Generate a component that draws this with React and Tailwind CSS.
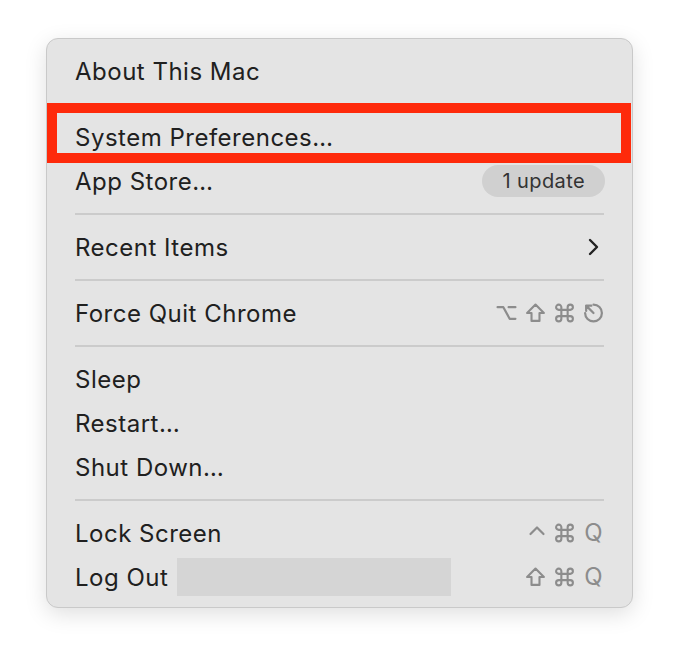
import React from "react";

const font = { fontFamily: "Inter, 'Noto Sans', 'Liberation Sans', sans-serif" };

function Option() {
  return (
    <svg width="21" height="22" viewBox="0 0 20 20" fill="none" stroke="currentColor" strokeWidth="2.1" strokeLinecap="round" strokeLinejoin="round">
      <path d="M1.5 4.5H7L13 15.5H18.5M12 4.5H18.5" />
    </svg>
  );
}

function Shift() {
  return (
    <svg width="21" height="22" viewBox="0 0 20 20" fill="none" stroke="currentColor" strokeWidth="2" strokeLinejoin="round">
      <path d="M10 2L2 10H6.2V17.5H13.8V10H18Z" />
    </svg>
  );
}

function Command() {
  return (
    <svg width="21" height="22" viewBox="0 0 20 20" fill="none" stroke="currentColor" strokeWidth="2" strokeLinejoin="round">
      <path d="M7 7V4.5A2.5 2.5 0 1 0 4.5 7H15.5A2.5 2.5 0 1 0 13 4.5V15.5A2.5 2.5 0 1 0 15.5 13H4.5A2.5 2.5 0 1 0 7 15.5Z" />
    </svg>
  );
}

function Control() {
  return (
    <svg width="18" height="22" viewBox="0 0 18 20" fill="none" stroke="currentColor" strokeWidth="2.2" strokeLinecap="round" strokeLinejoin="round">
      <path d="M2.5 11L9 4.5L15.5 11" />
    </svg>
  );
}

function Escape() {
  return (
    <svg width="21" height="22" viewBox="0 0 20 20" fill="none" stroke="currentColor" strokeWidth="2.1" strokeLinecap="round" strokeLinejoin="round">
      <path d="M10 2A8 8 0 1 1 2 10" />
      <path d="M10 10L3 3M3 8V3H8" />
    </svg>
  );
}

function Q() {
  return <span className="text-[24px] leading-none w-[21px] text-center">Q</span>;
}

function Row({ children, right }) {
  return (
    <div className="h-[44px] flex items-center justify-between">
      <span className="text-[24px] tracking-[0.5px] text-[#202020] pt-[1px]">{children}</span>
      {right}
    </div>
  );
}

function Sep() {
  return (
    <div className="h-[22px] flex items-center">
      <div className="h-[2px] w-full bg-[#cbcbcb]" />
    </div>
  );
}

function Keys({ children }) {
  return <div className="flex items-center gap-[8px] text-[#8c8c8c]">{children}</div>;
}

export default function App() {
  return (
    <div className="w-[678px] h-[662px] bg-white pt-[38px] pl-[46px]" style={font}>
      <div className="relative w-[587px] rounded-[12px] bg-[#e4e4e4] border border-[#c9c9c9] shadow-[0_6px_22px_rgba(0,0,0,0.13)] pt-[10px] pb-[8px] px-[28px]">
        <Row>About This Mac</Row>
        <Sep />
        <Row>System Preferences…</Row>
        <Row
          right={
            <span className="h-[32px] px-[20px] rounded-full bg-[#d0d0d0] text-[#333] text-[20px] tracking-[0.4px] flex items-center -mr-[1px]">
              1 update
            </span>
          }
        >
          App Store…
        </Row>
        <Sep />
        <Row
          right={
            <svg width="14" height="20" viewBox="0 0 14 20" fill="none" stroke="#222" strokeWidth="2.4" strokeLinecap="round" strokeLinejoin="round" className="mr-[4px]">
              <path d="M4 3L11 10L4 17" />
            </svg>
          }
        >
          Recent Items
        </Row>
        <Sep />
        <Row
          right={
            <Keys>
              <Option />
              <Shift />
              <Command />
              <Escape />
            </Keys>
          }
        >
          Force Quit Chrome
        </Row>
        <Sep />
        <Row>Sleep</Row>
        <Row>Restart…</Row>
        <Row>Shut Down…</Row>
        <Sep />
        <Row
          right={
            <Keys>
              <Control />
              <Command />
              <Q />
            </Keys>
          }
        >
          Lock Screen
        </Row>
        <div className="h-[44px] flex items-center justify-between">
          <div className="flex items-center">
            <span className="text-[24px] tracking-[0.5px] text-[#202020] pt-[1px]">Log Out</span>
            <div className="ml-[9px] w-[274px] h-[38px] bg-[#d5d5d5]" />
          </div>
          <Keys>
            <Shift />
            <Command />
            <Q />
          </Keys>
        </div>
        <div className="absolute left-0 top-[64px] w-[584px] h-[60px] border-[10px] border-[#fe2a0b]" />
      </div>
    </div>
  );
}
